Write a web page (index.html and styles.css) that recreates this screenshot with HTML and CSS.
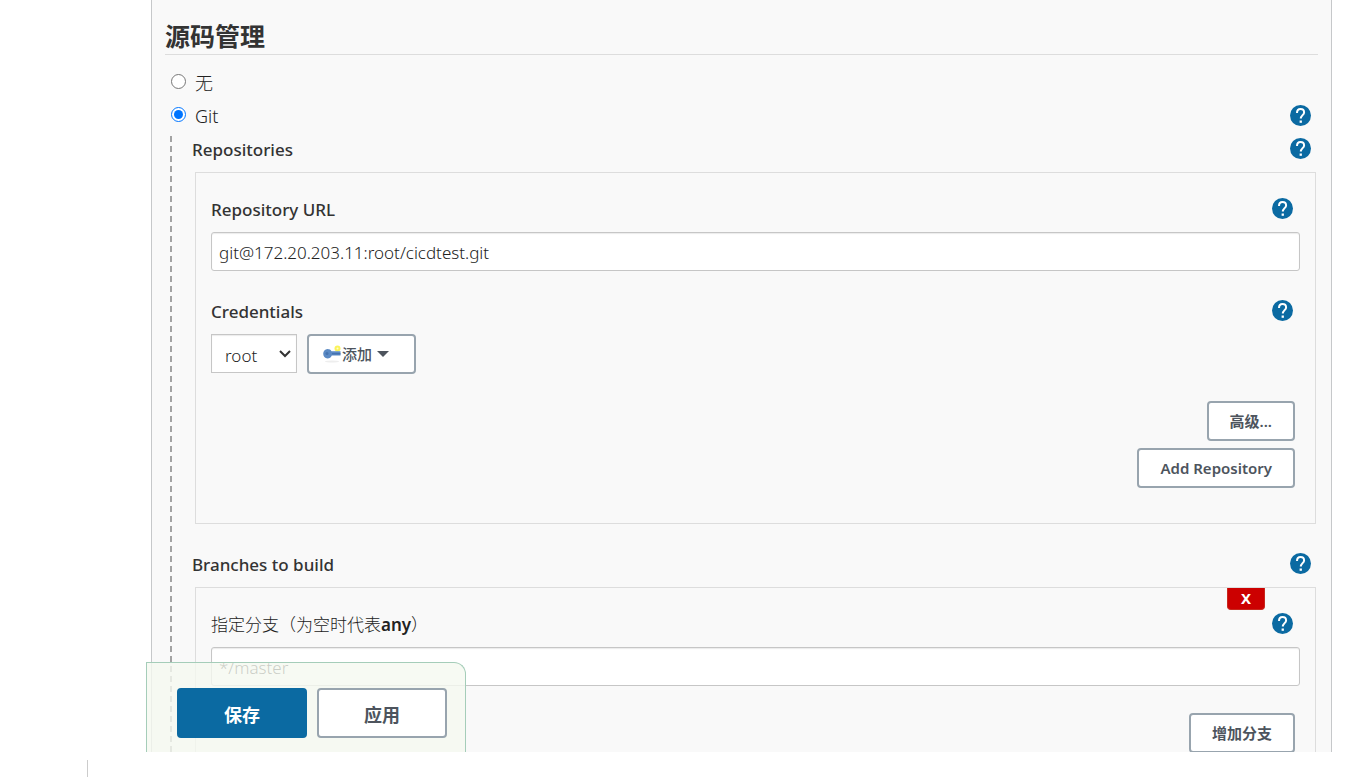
FILE: index.html
```
<!DOCTYPE html>
<html lang="zh-CN">
<head>
<meta charset="utf-8">
<title>源码管理</title>
<link rel="stylesheet" href="styles.css">
</head>
<body>
<svg class="sprite" aria-hidden="true">
  <symbol id="help" viewBox="0 0 21 21">
    <circle cx="10.500" cy="10.500" r="10.500" fill="#0b6aa2"/>
    <path d="M7 8.100C7 5.500 8.400 4 10.500 4s3.600 1.500 3.600 3.400c0 2.600-3.300 3-3.300 6.200" fill="none" stroke="#fff" stroke-width="2"/>
    <rect x="9.600" y="15.500" width="2.300" height="2.300" fill="#fff"/>
  </symbol>
</svg>
<form class="frame">
  <main class="panel">
    <h1 class="title">源码管理</h1>
    <div class="scm-list">
      <div class="scm-row">
        <input class="radio" type="radio" name="scm" id="scm-none">
        <label for="scm-none">无</label>
      </div>
      <div class="scm-row">
        <input class="radio" type="radio" name="scm" id="scm-git" checked>
        <label for="scm-git">Git</label>
        <button class="help" type="button" aria-label="Git 帮助"><svg><use href="#help"/></svg></button>
      </div>
    </div>
    <div class="nested">
      <section class="group">
        <div class="row">
          <h2 class="label">Repositories</h2>
          <button class="help" type="button" aria-label="Repositories 帮助"><svg><use href="#help"/></svg></button>
        </div>
        <div class="box">
          <div class="field">
            <div class="row">
              <label class="label" for="repo-url">Repository URL</label>
              <button class="help" type="button" aria-label="Repository URL 帮助"><svg><use href="#help"/></svg></button>
            </div>
            <input class="text" type="text" id="repo-url" value="git@172.20.203.11:root/cicdtest.git">
          </div>
          <div class="field">
            <div class="row">
              <label class="label" for="credentials">Credentials</label>
              <button class="help" type="button" aria-label="Credentials 帮助"><svg><use href="#help"/></svg></button>
            </div>
            <div class="credentials">
              <select class="select" id="credentials"><option>root</option></select>
              <button class="btn btn-add" type="button">
                <svg class="key" viewBox="0 0 20 18">
                  <ellipse cx="10" cy="16.500" rx="7" ry="1" fill="#eee"/>
                  <circle cx="15.500" cy="3.500" r="3" fill="#fbf35a"/>
                  <circle cx="15.500" cy="3.500" r="1" fill="#fffbd0"/>
                  <path d="M5.500 4c2 0 3.300.8 4 2.300h9v4.200H9.800c-.8 1.900-2.200 2.900-4.300 2.900C2.900 13.400 1.200 11.400 1.200 8.800S2.900 4 5.500 4z" fill="#5b8ac4"/>
                  <path d="M10 8.800h8.500" stroke="#3c69a8"/>
                  <circle cx="5" cy="8.500" r="1.500" fill="#4674b0"/>
                </svg>
                <span>添加</span>
                <svg class="caret" viewBox="0 0 12 6"><path d="M0 0h12L6 6z" fill="#4d545d"/></svg>
              </button>
            </div>
          </div>
          <div class="actions">
            <button class="btn" type="button">高级...</button>
            <button class="btn" type="button">Add Repository</button>
          </div>
        </div>
      </section>
      <section class="group">
        <div class="row">
          <h2 class="label">Branches to build</h2>
          <button class="help" type="button" aria-label="Branches to build 帮助"><svg><use href="#help"/></svg></button>
        </div>
        <div class="box">
          <button class="delete" type="button">X</button>
          <div class="field">
            <div class="row">
              <label class="label label-light" for="branch">指定分支（为空时代表<b>any</b>）</label>
              <button class="help" type="button" aria-label="指定分支 帮助"><svg><use href="#help"/></svg></button>
            </div>
            <input class="text" type="text" id="branch" value="*/master">
          </div>
          <div class="actions">
            <button class="btn" type="button">增加分支</button>
          </div>
        </div>
      </section>
    </div>
  </main>
  <div class="savebar">
    <button class="btn-large primary" type="submit">保存</button>
    <button class="btn-large" type="button">应用</button>
  </div>
</form>
<div class="below"></div>
</body>
</html>
```
FILE: styles.css
```
* { box-sizing: border-box; }

body {
  margin: 0;
  height: 100vh;
  display: flex;
  flex-direction: column;
  background: #fff;
  color: #333;
  font: 17px/26px "Noto Sans", "Noto Sans CJK SC", sans-serif;
}

button, input, select { font: inherit; color: inherit; }
button { cursor: pointer; }

.sprite { position: absolute; width: 0; height: 0; }

.frame {
  position: relative;
  flex: 1;
  min-height: 0;
  overflow: hidden;
  padding: 0 32px 0 151px;
}

.panel {
  min-height: 100%;
  padding: 19px 13px 27px;
  background: #f9f9f9;
  border: solid #c6c8ca;
  border-width: 0 1px;
}

.title {
  margin: 0;
  padding-bottom: 1px;
  border-bottom: 1px solid #ddd;
  font-size: 25px;
  line-height: 34px;
  font-weight: 700;
}

.scm-list { padding: 12px 7px 0 6px; }

.scm-row {
  display: flex;
  align-items: center;
  height: 33px;
  font-size: 18px;
}

.scm-row label {
  margin: 0 0 2px 9px;
  color: #222;
  font-weight: 300;
}

.scm-row .help { margin-bottom: 3px; }

.radio { width: 15px; height: 15px; margin: 0 0 5px; }

.help {
  flex: none;
  width: 21px;
  height: 21px;
  margin: 0 0 1px auto;
  padding: 0;
  border: 0;
  background: none;
}

.help svg { display: block; width: 21px; height: 21px; }

.nested {
  margin: 3px 2px 0 5px;
  padding-left: 22px;
  background: repeating-linear-gradient(#a3a3a3 0 6px, transparent 6px 10px) left top / 2px 100% no-repeat;
}

.row {
  display: flex;
  align-items: center;
  height: 26px;
  margin-bottom: 10px;
  padding-right: 5px;
}

.label { margin: 0; padding-top: 2px; font-size: 17px; font-weight: 500; }
.label-light { color: #222; font-weight: 300; }
.label-light b { font-weight: 600; }

.group + .group { margin-top: 27px; }

.box {
  position: relative;
  margin-left: 3px;
  padding: 23px 15px 35px;
  border: 1px solid #ddd;
}

.box .row { padding-right: 7px; }

.field { margin-bottom: 27px; }

.text {
  display: block;
  width: 100%;
  height: 39px;
  padding: 2px 7px 0;
  border: 1px solid #c6c6c6;
  border-radius: 3px;
  background: #fff;
  box-shadow: inset 0 1px 1px rgba(0, 0, 0, .08);
  color: #222;
  font-weight: 300;
}

.credentials { display: flex; gap: 10px; }

.select {
  appearance: none;
  width: 86px;
  height: 39px;
  padding: 5px 24px 0 13px;
  border: 1px solid #c6c6c6;
  border-radius: 0;
  background: #fff url("data:image/svg+xml,%3Csvg xmlns='http://www.w3.org/2000/svg' width='12' height='8'%3E%3Cpath d='M1 1l5 5 5-5' fill='none' stroke='%23333' stroke-width='2'/%3E%3C/svg%3E") no-repeat right 5px center;
  box-shadow: inset 0 1px 1px rgba(0, 0, 0, .08);
  color: #222;
  font-weight: 300;
}

.btn {
  height: 40px;
  padding: 0 21px;
  border: 2px solid #98a4ae;
  border-radius: 4px;
  background: #fff;
  color: #4d545d;
  font-size: 15px;
  font-weight: 600;
}

.btn-add {
  display: flex;
  align-items: center;
  padding: 0 25px 0 13px;
  font-weight: 500;
}

.key { width: 20px; height: 18px; }
.caret { width: 12px; height: 6px; margin-left: 5px; }

.actions {
  display: flex;
  flex-direction: column;
  align-items: flex-end;
  gap: 7px;
  padding-right: 5px;
}

.delete {
  position: absolute;
  top: 0;
  right: 50px;
  width: 38px;
  height: 22px;
  padding: 0;
  border: 1px solid #c8281e;
  border-top: 0;
  border-radius: 0 0 4px 4px;
  background: #c00;
  color: #fff;
  font-size: 15px;
  line-height: 21px;
  font-weight: 700;
}

.savebar {
  position: absolute;
  left: 146px;
  bottom: 0;
  display: flex;
  gap: 10px;
  padding: 25px 18px 14px 30px;
  border: 1px solid #a5cdb9;
  border-bottom: 0;
  border-top-right-radius: 12px;
  background: rgba(245, 249, 240, .8);
}

.btn-large {
  width: 130px;
  height: 50px;
  padding: 3px 0 0;
  border: 2px solid #98a4ae;
  border-radius: 4px;
  background: #fff;
  color: #4d545d;
  font-size: 18px;
  font-weight: 700;
}

.primary { border-color: #0b6aa2; background: #0b6aa2; color: #fff; }

.below {
  height: 17px;
  margin: 8px 0 0 87px;
  border-left: 1px solid #ccc;
}
```
